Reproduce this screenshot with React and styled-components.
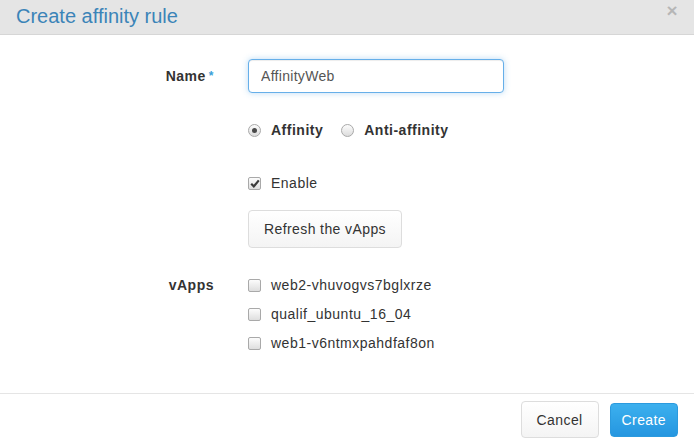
import React from 'react';
import styled, { createGlobalStyle } from 'styled-components';

const GlobalStyle = createGlobalStyle`
  html, body {
    margin: 0;
    padding: 0;
    background: #ffffff;
  }
  body {
    font-family: 'Liberation Sans', Arial, sans-serif;
    font-size: 14px;
    color: #333333;
  }
  * { box-sizing: border-box; }
`;

const Modal = styled.div`
  width: 694px;
  height: 445px;
  display: flex;
  flex-direction: column;
  background: #ffffff;
  letter-spacing: 0.5px;
`;

const Header = styled.div`
  height: 35px;
  background: #e5e5e5;
  border-bottom: 1px solid #d6d6d6;
  display: flex;
  align-items: center;
  justify-content: space-between;
  padding: 0 16px;
`;

const Title = styled.h4`
  margin: 0;
  font-size: 20px;
  font-weight: normal;
  color: #3b84b8;
  letter-spacing: 0;
  line-height: 1;
  margin-top: -2px;
`;

const Close = styled.span`
  font-size: 19px;
  font-weight: bold;
  color: #000;
  opacity: 0.2;
  line-height: 1;
  align-self: flex-start;
  margin-top: 1px;
`;

const Body = styled.div`
  flex: 1;
  padding-top: 24px;
  display: flex;
  flex-direction: column;
`;

const Row = styled.div`
  display: grid;
  grid-template-columns: 214px 1fr;
  column-gap: 34px;
  align-items: ${p => (p.$top ? 'start' : 'center')};
  margin-bottom: ${p => p.$mb || 0}px;
`;

const Label = styled.label`
  text-align: right;
  font-weight: bold;
  color: #333;
  line-height: 20px;
`;

const Required = styled.span`
  color: #3aa0d8;
  font-weight: bold;
  margin-left: 3px;
  font-size: 12px;
  vertical-align: 1px;
`;

const Input = styled.input`
  width: 256px;
  height: 34px;
  border: 1px solid #66afe9;
  border-radius: 4px;
  padding: 6px 12px;
  font-family: inherit;
  font-size: 14px;
  letter-spacing: 0.3px;
  color: #555;
  box-shadow: inset 0 1px 1px rgba(0, 0, 0, 0.075), 0 0 6px rgba(102, 175, 233, 0.45);
  outline: none;
`;

const Options = styled.div`
  display: flex;
  align-items: center;
  gap: ${p => p.$gap || 0}px;
`;

const Choice = styled.label`
  display: flex;
  align-items: center;
  gap: 10px;
  font-weight: ${p => (p.$bold ? 'bold' : 'normal')};
  line-height: 20px;
  height: 20px;
`;

const RadioBox = styled.span`
  width: 13px;
  height: 13px;
  border-radius: 50%;
  border: 1px solid #a9a9a9;
  background: linear-gradient(#fcfcfc, #dcdcdc);
  display: flex;
  align-items: center;
  justify-content: center;
  &::after {
    content: '';
    width: 5px;
    height: 5px;
    border-radius: 50%;
    background: ${p => (p.$on ? '#4a4a4a' : 'transparent')};
  }
`;

const CheckBox = styled.span`
  width: 13px;
  height: 13px;
  border-radius: 2px;
  border: 1px solid #a9a9a9;
  background: linear-gradient(#fcfcfc, #dedede);
  display: flex;
  align-items: center;
  justify-content: center;
`;

const Button = styled.button`
  font-family: inherit;
  font-size: 14px;
  letter-spacing: 0.4px;
  height: ${p => p.$h || 37}px;
  padding: 0 ${p => p.$px || 15}px;
  border-radius: 4px;
  cursor: pointer;
  color: ${p => (p.$primary ? '#ffffff' : '#333333')};
  border: 1px solid ${p => (p.$primary ? '#2b9ade' : '#dddddd')};
  background: ${p =>
    p.$primary
      ? 'linear-gradient(#3cb0ee, #2596e0)'
      : 'linear-gradient(#ffffff, #f4f4f4)'};
`;

const VList = styled.div`
  display: flex;
  flex-direction: column;
  gap: 9px;
`;

const Footer = styled.div`
  border-top: 1px solid #e5e5e5;
  height: 52px;
  display: flex;
  justify-content: flex-end;
  align-items: center;
  gap: 11px;
  padding: 0 16px 0 0;
`;

const Check = () => (
  <svg width="10" height="9" viewBox="0 0 10 9">
    <path d="M1.2 4.8 L3.8 7.4 L8.8 1.4" fill="none" stroke="#3a3a3a" strokeWidth="2.2" />
  </svg>
);

const vapps = ['web2-vhuvogvs7bglxrze', 'qualif_ubuntu_16_04', 'web1-v6ntmxpahdfaf8on'];

export default function App() {
  return (
    <>
      <GlobalStyle />
      <Modal>
        <Header>
          <Title>Create affinity rule</Title>
          <Close>×</Close>
        </Header>
        <Body>
          <Row $mb={27}>
            <Label>
              Name<Required>*</Required>
            </Label>
            <div>
              <Input defaultValue="AffinityWeb" />
            </div>
          </Row>
          <Row $mb={33}>
            <span />
            <Options $gap={18}>
              <Choice $bold>
                <RadioBox $on />
                Affinity
              </Choice>
              <Choice $bold>
                <RadioBox />
                Anti-affinity
              </Choice>
            </Options>
          </Row>
          <Row $mb={17}>
            <span />
            <Choice>
              <CheckBox>
                <Check />
              </CheckBox>
              Enable
            </Choice>
          </Row>
          <Row $mb={27}>
            <span />
            <div>
              <Button $h={38}>Refresh the vApps</Button>
            </div>
          </Row>
          <Row $top>
            <Label>vApps</Label>
            <VList>
              {vapps.map(v => (
                <Choice key={v}>
                  <CheckBox />
                  {v}
                </Choice>
              ))}
            </VList>
          </Row>
        </Body>
        <Footer>
          <Button $h={37} $px={15}>Cancel</Button>
          <Button $primary $h={34} $px={11}>Create</Button>
        </Footer>
      </Modal>
    </>
  );
}
